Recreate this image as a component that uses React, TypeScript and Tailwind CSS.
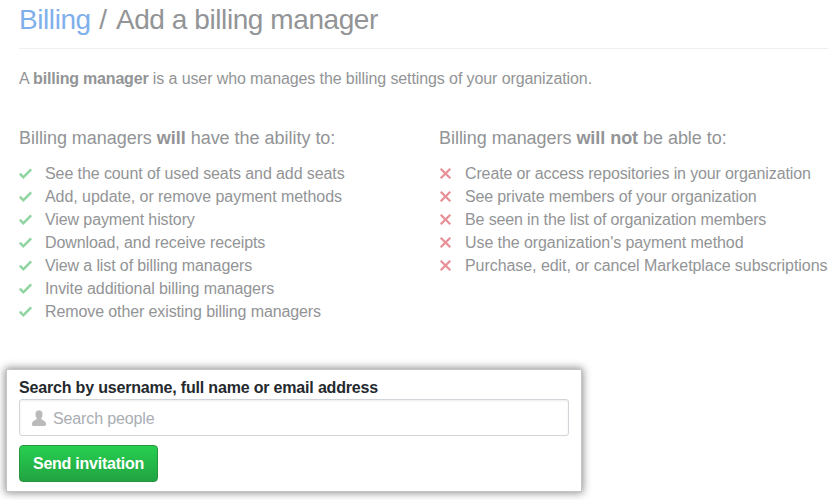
import React from 'react';

const abilities = [
  { text: 'See the count of used seats and add seats', cls: 'tracking-[-0.09px]' },
  { text: 'Add, update, or remove payment methods', cls: 'tracking-[-0.05px]' },
  { text: 'View payment history', cls: 'tracking-[-0.1px]' },
  { text: 'Download, and receive receipts', cls: 'tracking-[-0.1px]' },
  { text: 'View a list of billing managers', cls: 'tracking-[-0.11px]' },
  { text: 'Invite additional billing managers', cls: 'tracking-[-0.09px]' },
  { text: 'Remove other existing billing managers', cls: 'tracking-[-0.11px]' },
];

const restrictions = [
  { text: 'Create or access repositories in your organization', cls: 'tracking-[-0.13px]' },
  { text: 'See private members of your organization', cls: 'tracking-[-0.14px]' },
  { text: 'Be seen in the list of organization members', cls: 'tracking-[-0.13px]' },
  { text: "Use the organization's payment method", cls: 'tracking-[-0.08px]' },
  { text: 'Purchase, edit, or cancel Marketplace subscriptions', cls: 'tracking-[-0.06px]' },
];

function Check() {
  return (
    <svg className="mt-[3px] h-[17px] w-[13px] shrink-0 fill-[#8fd3a0] stroke-[#8fd3a0] stroke-[0.4]" viewBox="0 0 12 16">
      <path d="M12 5l-8 8-4-4 1.5-1.5L4 10l6.5-6.5L12 5z" />
    </svg>
  );
}

function Cross() {
  return (
    <svg className="mt-[3px] h-[17px] w-[13px] shrink-0 fill-[#e88f97]" viewBox="0 0 12 16">
      <path d="M7.48 8l3.75 3.75-1.48 1.48L6 9.48l-3.75 3.75-1.48-1.48L4.52 8 .77 4.25l1.48-1.48L6 6.52l3.75-3.75 1.48 1.48L7.48 8z" />
    </svg>
  );
}

function Person() {
  return (
    <svg className="h-[18px] w-[14px] shrink-0 fill-[#bbbbbb]" viewBox="0 0 12 16" preserveAspectRatio="none">
      <path d="M12 14.002a.998.998 0 01-.998.998H1.001A1 1 0 010 13.999V13c0-2.633 4-4 4-4s.229-.409 0-1c-.841-.62-.944-1.59-1-4 .173-2.413 1.867-3 3-3s2.827.586 3 3c-.056 2.41-.159 3.38-1 4-.229.59 0 1 0 1s4 1.367 4 4v1.002z" />
    </svg>
  );
}

export default function App() {
  return (
    <div className="h-[500px] w-[836px] overflow-hidden bg-white font-['Liberation_Sans',Arial,sans-serif] text-[16px] leading-[23px] whitespace-nowrap text-[#929496]">
      <header className="ml-[19px] flex h-[49px] w-[809px] border-b border-[#eeefef] pt-[3px]">
        <h1 className="text-[28px] leading-[34px] tracking-[-0.42px]">
          <a className="text-[#80b0ec]">Billing</a>
          <span className="tracking-[0.6px]"> / </span>
          Add a billing manager
        </h1>
      </header>
      <p className="mt-[18px] ml-[19px] tracking-[-0.1px]">
        A <strong className="tracking-[-0.19px]">billing manager</strong> is a user who manages the billing settings of your organization.
      </p>
      <div className="mt-[36px] ml-[19px] flex h-[243px]">
        <section className="w-[420px]">
          <h2 className="text-[18px] leading-[24px] tracking-[-0.02px]">
            Billing managers <strong>will</strong> have the ability to:
          </h2>
          <ul className="mt-[12px]">
            {abilities.map((a) => (
              <li key={a.text} className="flex h-[23px] gap-[13px]">
                <Check />
                <span className={a.cls}>{a.text}</span>
              </li>
            ))}
          </ul>
        </section>
        <section>
          <h2 className="text-[18px] leading-[24px] tracking-[-0.04px]">
            Billing managers <strong>will not</strong> be able to:
          </h2>
          <ul className="mt-[12px]">
            {restrictions.map((r) => (
              <li key={r.text} className="flex h-[23px] gap-[13px]">
                <Cross />
                <span className={r.cls}>{r.text}</span>
              </li>
            ))}
          </ul>
        </section>
      </div>
      <form className="ml-[6px] h-[123px] w-[576px] border border-[#c4c4c4] bg-white px-[12px] pt-[6px] shadow-[0_0_8px_1px_rgba(0,0,0,0.45)]">
        <label className="block font-bold tracking-[-0.18px] text-[#24292e]">Search by username, full name or email address</label>
        <div className="flex h-[37px] w-[550px] items-center gap-[7px] rounded-[3px] border border-[#d1d5da] pl-[12px] text-[#aaadb2] shadow-[inset_0_1px_2px_rgba(27,31,35,0.075)]">
          <Person />
          <span className="pt-[2px] tracking-[-0.13px]">Search people</span>
        </div>
        <button
          type="button"
          className="mt-[9px] flex h-[37px] w-[139px] items-center justify-center rounded-[4px] border border-[#25963d] bg-linear-to-b from-[#27d04f] to-[#21a342] font-bold tracking-[-0.24px] text-white"
        >
          Send invitation
        </button>
      </form>
    </div>
  );
}
